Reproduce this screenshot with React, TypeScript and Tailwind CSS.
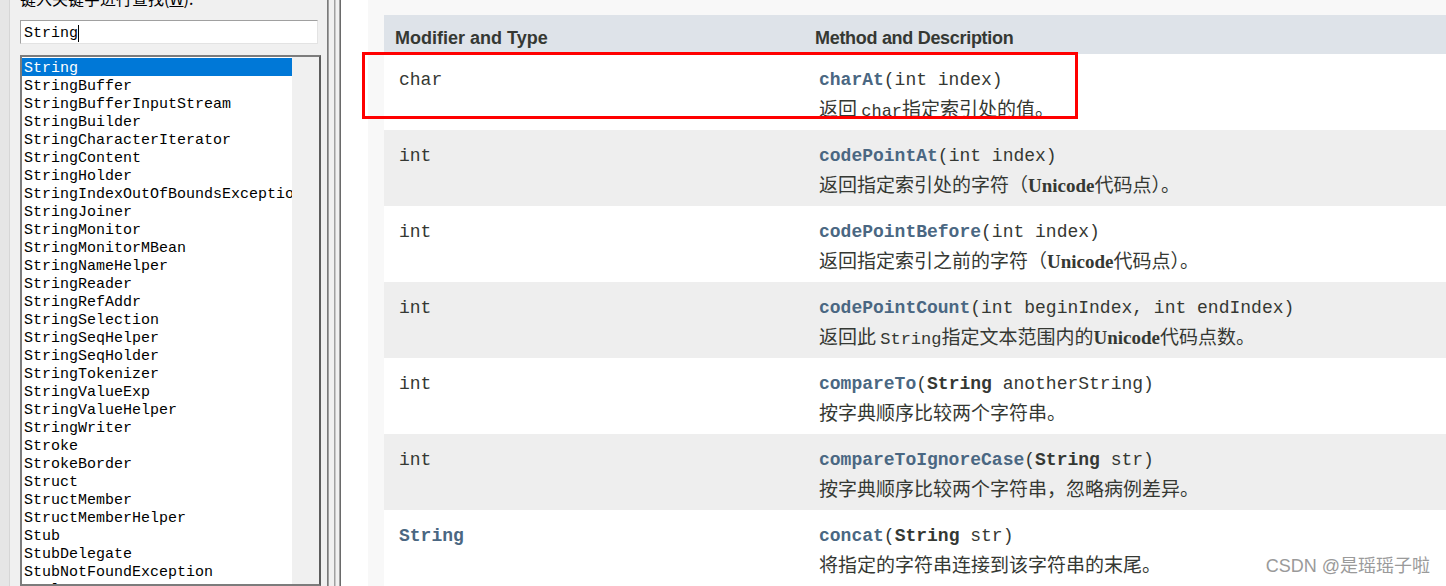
import React from "react";

const classes = [
  "String",
  "StringBuffer",
  "StringBufferInputStream",
  "StringBuilder",
  "StringCharacterIterator",
  "StringContent",
  "StringHolder",
  "StringIndexOutOfBoundsException",
  "StringJoiner",
  "StringMonitor",
  "StringMonitorMBean",
  "StringNameHelper",
  "StringReader",
  "StringRefAddr",
  "StringSelection",
  "StringSeqHelper",
  "StringSeqHolder",
  "StringTokenizer",
  "StringValueExp",
  "StringValueHelper",
  "StringWriter",
  "Stroke",
  "StrokeBorder",
  "Struct",
  "StructMember",
  "StructMemberHelper",
  "Stub",
  "StubDelegate",
  "StubNotFoundException",
  "Style",
];

const mono = "font-['Liberation_Mono',monospace]";
const cjk = "font-['Noto_Sans_CJK_SC',sans-serif]";

const Code = ({ children }: { children: React.ReactNode }) => (
  <span className={`${mono} text-[17px]`}>{children}</span>
);

const Uni = () => (
  <span className="font-['Liberation_Serif','Noto_Sans_CJK_SC',serif] font-bold text-[19px]">Unicode</span>
);

const Name = ({ children }: { children: React.ReactNode }) => (
  <span className="font-bold text-[#4a6782]">{children}</span>
);

type Row = { type: React.ReactNode; method: React.ReactNode; desc: React.ReactNode };

const rows: Row[] = [
  {
    type: "char",
    method: (
      <>
        <Name>charAt</Name>(int index)
      </>
    ),
    desc: (
      <>
        返回 <Code>char</Code>指定索引处的值。
      </>
    ),
  },
  {
    type: "int",
    method: (
      <>
        <Name>codePointAt</Name>(int index)
      </>
    ),
    desc: (
      <>
        返回指定索引处的字符（<Uni />代码点）。
      </>
    ),
  },
  {
    type: "int",
    method: (
      <>
        <Name>codePointBefore</Name>(int index)
      </>
    ),
    desc: (
      <>
        返回指定索引之前的字符（<Uni />代码点）。
      </>
    ),
  },
  {
    type: "int",
    method: (
      <>
        <Name>codePointCount</Name>(int beginIndex, int endIndex)
      </>
    ),
    desc: (
      <>
        返回此 <Code>String</Code>指定文本范围内的<Uni />代码点数。
      </>
    ),
  },
  {
    type: "int",
    method: (
      <>
        <Name>compareTo</Name>(<span className="font-bold">String</span> anotherString)
      </>
    ),
    desc: <>按字典顺序比较两个字符串。</>,
  },
  {
    type: "int",
    method: (
      <>
        <Name>compareToIgnoreCase</Name>(<span className="font-bold">String</span> str)
      </>
    ),
    desc: <>按字典顺序比较两个字符串，忽略病例差异。</>,
  },
  {
    type: <Name>String</Name>,
    method: (
      <>
        <Name>concat</Name>(<span className="font-bold">String</span> str)
      </>
    ),
    desc: <>将指定的字符串连接到该字符串的末尾。</>,
  },
];

const SearchPanel = () => (
  <div className="flex h-full">
    <div className="w-[10px] h-full bg-[#e6e6e6] border-r border-[#d6d6d6]" />
    <div className="w-[317px] h-full bg-[#f0f0f0] pl-[10px] flex flex-col">
      <div className={`${cjk} text-[16px] leading-[20px] mt-[-12px] text-black`}>
        键入关键字进行查找(<span className="underline">W</span>):
      </div>
      <div className="mt-[12px] w-[298px] h-[24px] bg-white border border-t-[#a0a0a0] border-l-[#a0a0a0] border-r-[#e3e3e3] border-b-[#e3e3e3] flex items-center pl-[3px] pt-[3px]">
        <span className={`${mono} text-[15px] text-black leading-[18px]`}>String</span>
        <span className="inline-block w-px h-[17px] bg-black" />
      </div>
      <div className="mt-[11px] w-[301px] flex-1 border-2 border-[#7c7c7c] border-r-[#5c5c5c] flex overflow-hidden">
        <div className="w-[270px] bg-white pt-[1px] overflow-hidden">
          {classes.map((c, i) => (
            <div
              key={c}
              className={`${mono} text-[15px] h-[18px] leading-[18px] pt-[2px] pl-[2px] whitespace-nowrap ${
                i === 0 ? "bg-[#0078d7] text-white" : "text-black"
              }`}
            >
              {c}
            </div>
          ))}
        </div>
        <div className="flex-1 bg-[#f0f0f0]" />
      </div>
    </div>
  </div>
);

const Splitter = () => (
  <div className="flex h-full">
    <div className="w-px bg-[#7a7a7a]" />
    <div className="w-px bg-[#a0a0a0]" />
    <div className="w-[5px] bg-[#f0f0f0]" />
    <div className="w-px bg-[#a0a0a0]" />
    <div className="w-px bg-[#c8c8c8]" />
    <div className="w-[3px] bg-[#f0f0f0]" />
    <div className="w-px bg-[#a0a0a0]" />
    <div className="w-px bg-[#6a6a6a]" />
  </div>
);

const MethodTable = () => (
  <div className="flex-1 h-full bg-[#f8f8f8] pl-[16px] pt-[15px] overflow-hidden">
    <div className="flex h-[39px] bg-[#dee3e9] text-[#353833] font-['Liberation_Sans',Arial,sans-serif] font-bold leading-[22px]">
      <div className="w-[420px] pl-[11px] pt-[12px] text-[18px]">Modifier and Type</div>
      <div className="flex-1 pl-[11px] pt-[12px] text-[18px] tracking-[-0.3px]">Method and Description</div>
    </div>
    {rows.map((r, i) => (
      <div
        key={i}
        className={`flex h-[76px] text-[#353833] leading-[30px] ${i % 2 === 0 ? "bg-white" : "bg-[#eeeeee]"}`}
      >
        <div className={`w-[420px] pl-[15px] pt-[11px] ${mono} text-[18px]`}>{r.type}</div>
        <div className="flex-1 pl-[15px] pt-[11px]">
          <div className={`${mono} text-[18px] whitespace-nowrap`}>{r.method}</div>
          <div className={`${cjk} text-[19px] whitespace-nowrap mt-[-2px]`}>{r.desc}</div>
        </div>
      </div>
    ))}
  </div>
);

export default function App() {
  return (
    <div className="relative flex w-[1446px] h-[586px] overflow-hidden bg-white">
      <SearchPanel />
      <Splitter />
      <div className="w-[27px] h-full bg-white" />
      <MethodTable />
      <div className="absolute left-[362px] top-[52px] w-[716px] h-[67px] border-[3px] border-[#ff0000]" />
      <div className="absolute right-[16px] bottom-[8px] text-[18px] leading-[24px] text-[#9a9a9a] font-['Liberation_Sans','Noto_Sans_CJK_SC',sans-serif] [text-shadow:0_0_2px_#ffffff]">
        CSDN @是瑶瑶子啦
      </div>
    </div>
  );
}
